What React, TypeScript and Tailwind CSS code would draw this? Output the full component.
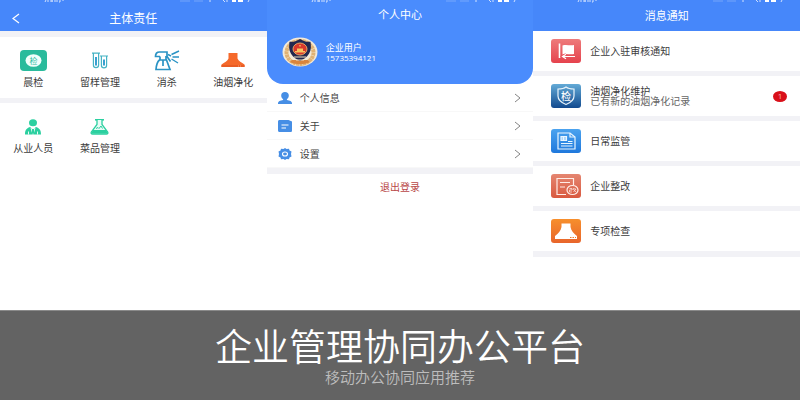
import React from 'react';

const StatusBar = () => (
  <div className="flex h-[3px] justify-between overflow-hidden pl-11 pr-4 text-white" aria-hidden="true">
    <svg width="20" height="3" viewBox="0 0 20 3" stroke="currentColor" fill="none" opacity=".75">
      <path d="M1 2l1-2M4 0v2M6 1h3M8 0v2M11 2V0M12 1h2M16 0v2h-1M19 0v1" />
    </svg>
    <svg width="72" height="3" viewBox="0 0 72 3" stroke="currentColor" fill="none">
      <path d="M1 1h10M15 1h9" opacity=".25" />
      <path d="M31 0v2M44 0l2 2M48 0v2M70 0l-1 2" opacity=".75" />
      <path d="M53 1h4M59 1h5" strokeWidth="2" />
    </svg>
  </div>
);

const Chevron = () => (
  <svg width="7" height="10" viewBox="0 0 7 10" fill="none" stroke="#858585" strokeWidth="1">
    <path d="M1 1l5 4-5 4" />
  </svg>
);

/* Duty icons */
const CheckIcon = () => (
  <svg width="27" height="21" viewBox="0 0 27 21">
    <rect width="27" height="21" rx="4" fill="#2abb9c" />
    <ellipse cx="13.5" cy="10.5" rx="8" ry="6.3" fill="#f2fffc" />
    <text x="13.5" y="13.5" fontSize="8" textAnchor="middle" fill="#2abb9c">检</text>
  </svg>
);

const TubesIcon = () => (
  <svg width="16" height="17" viewBox="0 0 16 17" fill="none" stroke="#45b3c4" strokeWidth="1.2">
    <path d="M0 1.200h8M1.400 1v12a2.600 2.600 0 0 0 5.200 0V1M8 4h8M9.400 4v9.200a2.600 2.600 0 0 0 5.200 0V4" />
    <path d="M3 5h2v8.500H3zM11 7.500h2v6h-2z" fill="#3a9fd0" stroke="none" />
  </svg>
);

const SprayIcon = () => (
  <svg width="26" height="21" viewBox="0 0 26 21" fill="none" stroke="#2a93c4" strokeWidth="1.7">
    <path d="M6 6.500H1.500c0-3 1.500-4.500 4-4.500H13v4.500l3.500 5M6 6.500v3.500M12 6v4" />
    <path d="M5.500 10h7L16 19.500H2C2.300 15.500 3 12 5.500 10z" />
    <path d="M9 10v6" />
    <path d="M14 4.500l3 1.500M17.500 4.500L25 1M18.500 7H25M17.500 9l6.500 4" strokeWidth="1.4" />
  </svg>
);

const HoodIcon = () => (
  <svg width="24" height="15" viewBox="0 0 24 15">
    <path d="M7.500 0h9v5.500c1 2.500 4 4 7 6V14H.500v-2.500c3-2 6-3.500 7-6z" fill="#f5692b" />
    <path d="M.500 12h23v2H.500z" fill="#e95c24" />
    <path d="M17 13h4" stroke="#ffb48d" strokeDasharray="1 1" strokeWidth=".8" />
  </svg>
);

const StaffIcon = () => (
  <svg width="18" height="16" viewBox="0 0 18 16">
    <ellipse cx="9" cy="3.800" rx="4" ry="3.500" fill="#2bd0a0" />
    <path d="M1 15.500c0-4 1-6 5-7.500l3 2.500L12 8c4 1.500 5 3.500 5 7.500z" fill="#2bd0a0" />
    <path d="M7 9l2 6.500L11 9M4.500 12.500v3M13.500 12.500v3" stroke="#fff" strokeWidth=".9" fill="none" />
    <path d="M8.300 10h1.400l.5 4L9 15.500 7.800 14z" fill="#2bd0a0" />
  </svg>
);

const FlaskIcon = () => (
  <svg width="19" height="16" viewBox="0 0 19 16">
    <path d="M5 .800h9" stroke="#2bd0a0" strokeWidth="1.600" />
    <path d="M7 1v4.500L1.300 13c-.6 1.200 0 2 1.200 2h14c1.200 0 1.800-.8 1.200-2L12 5.500V1" fill="#e9fbf6" stroke="#2bd0a0" strokeWidth="1.300" />
    <path d="M3 11h13l2 3.500H1z" fill="#2bd0a0" />
    <path d="M6 9.500l2-1 1 1 2-2.500 1.500 2.500" fill="none" stroke="#2bd0a0" />
  </svg>
);

/* Profile menu icons */
const UserIcon = () => (
  <svg width="14" height="12" viewBox="0 0 14 12" fill="#468ee5">
    <path d="M7 0c2.400 0 3.800 1.400 3.800 3.500 0 1.700-.8 2.900-1.900 3.700v.8c3 .6 5.100 1.300 5.100 3V12H0v-1c0-1.700 2.100-2.400 5.100-3v-.8C4 6.400 3.200 5.200 3.200 3.500 3.200 1.400 4.600 0 7 0z" />
  </svg>
);

const AboutIcon = () => (
  <svg width="14" height="12" viewBox="0 0 14 12">
    <path d="M1.500 0h9L14 1.500v9c0 1-.6 1.500-1.500 1.500h-11C.6 12 0 11.400 0 10.500v-9C0 .6.600 0 1.500 0z" fill="#468ee5" />
    <path d="M3.500 5h7M3.500 8h4.500" stroke="#fff" strokeWidth="1.200" />
  </svg>
);

const GearIcon = () => (
  <svg width="14" height="12" viewBox="0 0 14 12">
    <path d="M5.500 1L7 0l1.500 1 2.500-.2.500 1.600 2 1-.5 2.600.5 2.600-2 1-.5 1.600-2.500-.2L7 12l-1.500-1-2.500.2-.5-1.600-2-1L1 6 .500 3.400l2-1L3 .800z" fill="#468ee5" />
    <ellipse cx="7" cy="6" rx="2.500" ry="2" fill="#468ee5" stroke="#fff" strokeWidth="1.100" />
  </svg>
);

const Avatar = () => (
  <svg width="36" height="30" viewBox="0 0 36 30" className="shrink-0">
    <ellipse cx="18" cy="15" rx="17.500" ry="14.500" fill="#f4ead8" />
    <ellipse cx="18" cy="15.500" rx="13.500" ry="11.500" fill="none" stroke="#e0b274" strokeWidth="4" strokeDasharray="3 .4" />
    <path d="M8 25c6 3 14 3 20 0l-2-2H10z" fill="#d9853d" />
    <path d="M18 2l4 2c2 .8 4 1 6.500.8.5 4 1 8-1.500 12-2 3.500-5 5.500-9 7.200-4-1.700-7-3.700-9-7.200-2.500-4-2-8-1.500-12C10 5 12 4.800 14 4z" fill="#23284f" />
    <ellipse cx="18" cy="12" rx="7" ry="6" fill="#d9382c" stroke="#efb064" strokeWidth=".9" />
    <path d="M13 14h10v1.500H13zM15 11.500h6V14h-6zM17.300 8h1.400v1.500h-1.400z" fill="#f6c45f" />
    <path d="M12 20h12M14 23h8" stroke="#efe0c0" strokeWidth="1" />
  </svg>
);

/* Message tiles */
const FlagArt = () => (
  <g fill="none" stroke="#fff">
    <path d="M8.500 4.500v14.500" strokeWidth="1.600" />
    <path d="M11.500 6.500c4-1.500 7 .5 11.500-.500v9c-4.500 1-7.500-1-11.500.500z" fill="#fff" stroke="none" />
    <path d="M12 17.500h12M15 15.300l-3.500 2.200 3.500 2.200" stroke="#e6505a" strokeWidth="2.600" />
    <path d="M12 17.500h12M15 15.300l-3.500 2.200 3.500 2.200" strokeWidth="1.200" />
  </g>
);

const ShieldArt = () => (
  <g>
    <path d="M15 3c2 1.600 5 2 8 2v7c0 4-3 6.500-8 8.500-5-2-8-4.500-8-8.500V5c3 0 6-.4 8-2z" fill="none" stroke="#e8f4fc" strokeWidth="1.200" />
    <text x="15" y="15.500" fontSize="10" fontWeight="500" textAnchor="middle" fill="#fff">检</text>
  </g>
);

const DocArt = () => (
  <g fill="none" stroke="#eaf6ff" strokeWidth="1.200">
    <path d="M7 4h12l5 4v12H7z" />
    <path d="M19 4v4h5" />
    <path d="M10 7.500h5.500v4H10zM12.500 8v3" fill="#a9d5fb" />
    <path d="M17 12.500h4.500M10 14.500h11.500M10 17h11.500" strokeWidth="1" />
  </g>
);

const ReviseArt = () => (
  <g fill="none" stroke="#ffece6" strokeWidth="1.200">
    <path d="M15 20.500H6V4.500h16.500V11" />
    <path d="M9 8.500h10M9 13h5" />
    <ellipse cx="21.500" cy="16" rx="5.500" ry="4.500" />
    <path d="M18.500 14.500h2.500v1.500h-2.500v2h2.500M23 14l-1 2M22.500 15h2.500l-2.500 3M23 16l2 2" strokeWidth=".7" />
  </g>
);

const RangeHoodArt = () => (
  <g>
    <path d="M10.500 4.500h9V8c.8 4 3 6.500 6.500 9v3H4v-3c3.500-2.500 5.700-5 6.500-9z" fill="#fff" />
    <path d="M19 18.500h6" stroke="#f27b2c" strokeDasharray="1.500 1" />
  </g>
);

const Tile = ({ id, from, to, children }: { id: string; from: string; to: string; children: React.ReactNode }) => (
  <svg width="30" height="24" viewBox="0 0 30 24" className="shrink-0">
    <defs>
      <linearGradient id={id} x1="0" y1="0" x2="0" y2="1">
        <stop offset="0" stopColor={from} />
        <stop offset="1" stopColor={to} />
      </linearGradient>
    </defs>
    <rect width="30" height="24" rx="3" fill={`url(#${id})`} />
    {children}
  </svg>
);

const dailyDuties = [
  { label: '晨检', icon: <CheckIcon /> },
  { label: '留样管理', icon: <TubesIcon /> },
  { label: '消杀', icon: <SprayIcon /> },
  { label: '油烟净化', icon: <HoodIcon /> },
];

const manageDuties = [
  { label: '从业人员', icon: <StaffIcon /> },
  { label: '菜品管理', icon: <FlaskIcon /> },
];

const menuItems = [
  { label: '个人信息', icon: <UserIcon /> },
  { label: '关于', icon: <AboutIcon /> },
  { label: '设置', icon: <GearIcon /> },
];

const messages = [
  { title: '企业入驻审核通知', from: '#ee7b7b', to: '#e5424d', art: <FlagArt /> },
  { title: '油烟净化维护', detail: '已有新的油烟净化记录', count: 1, from: '#63aad6', to: '#124a8f', art: <ShieldArt /> },
  { title: '日常监管', from: '#4ba3ef', to: '#1f78dc', art: <DocArt /> },
  { title: '企业整改', from: '#e58671', to: '#d9593f', art: <ReviseArt /> },
  { title: '专项检查', from: '#f78f2c', to: '#e8652b', art: <RangeHoodArt /> },
];

const DutyGrid = ({ items }: { items: { label: string; icon: React.ReactNode }[] }) => (
  <div className="grid grid-cols-4 bg-white pt-3 pb-[9px]">
    {items.map((item) => (
      <button key={item.label} type="button" className="flex flex-col items-center gap-[3px]">
        <span className="flex h-[23px] items-center">{item.icon}</span>
        <span className="text-[10px] leading-[14px] text-[#3c3c3c]">{item.label}</span>
      </button>
    ))}
  </div>
);

const DutyScreen = () => (
  <section>
    <header className="h-[31px] bg-[#4687fa] text-white">
      <StatusBar />
      <div className="grid grid-cols-[1fr_auto_1fr] items-center px-3 pt-1.5">
        <button type="button" aria-label="返回">
          <svg width="8" height="11" viewBox="0 0 8 11" fill="none" stroke="currentColor" strokeWidth="1.2">
            <path d="M7 1L1 5.500 7 10" />
          </svg>
        </button>
        <h2 className="text-[12px] leading-[18px]">主体责任</h2>
      </div>
    </header>
    <div className="flex flex-col gap-[5px] bg-[#f2f2f6] pt-1.5">
      <DutyGrid items={dailyDuties} />
      <DutyGrid items={manageDuties} />
    </div>
  </section>
);

const ProfileScreen = () => (
  <section>
    <header className="rounded-b-2xl bg-[#4a8cfd] pb-[17px] text-white">
      <StatusBar />
      <h2 className="pt-0.5 text-center text-[11px] leading-[18px]">个人中心</h2>
      <div className="flex items-center gap-2 pl-[15px] pt-[14px]">
        <Avatar />
        <div>
          <p className="text-[9px] leading-[11px]">企业用户</p>
          <p className="font-['Open_Sans',sans-serif] text-[8px] leading-[9px]">15735394121</p>
        </div>
      </div>
    </header>
    <ul>
      {menuItems.map((item) => (
        <li key={item.label}>
          <button type="button" className="flex h-7 w-full items-center gap-2 border-b border-[#f8f8f8] pl-[11px] pr-3 text-[10px] text-[#444]">
            {item.icon}
            <span className="flex-1 text-left">{item.label}</span>
            <Chevron />
          </button>
        </li>
      ))}
    </ul>
    <div className="h-1.5 bg-[#f2f2f6]" />
    <button type="button" className="block w-full py-[5px] text-center text-[10px] leading-4 text-[#b84646]">
      退出登录
    </button>
  </section>
);

const MessageScreen = () => (
  <section>
    <header className="h-[31px] bg-[#4687fa] text-white">
      <StatusBar />
      <h2 className="pt-[3px] text-center text-[11px] leading-[18px]">消息通知</h2>
    </header>
    <ul className="flex flex-col gap-[5px] bg-[#f2f2f6] pb-1.5">
      {messages.map((msg, index) => (
        <li key={msg.title} className="bg-white">
          <button type="button" className="flex h-10 w-full items-center gap-[9px] pl-[18px] pr-[13px] text-left text-[10px] leading-[10px]">
            <Tile id={`tile-${index}`} from={msg.from} to={msg.to}>
              {msg.art}
            </Tile>
            <span className="flex flex-1 flex-col text-[#3c3c3c]">
              {msg.title}
              {msg.detail && <span className="text-[#666]">{msg.detail}</span>}
            </span>
            {msg.count && (
              <span className="flex h-[11px] w-[14px] items-center justify-center rounded-[50%] bg-[#d9101a] font-['Open_Sans',sans-serif] text-[8px] text-[#ffb0b0]">
                {msg.count}
              </span>
            )}
          </button>
        </li>
      ))}
    </ul>
  </section>
);

const App = () => {
  return (
    <main className="flex min-h-screen flex-col bg-white font-['Noto_Sans_CJK_SC',sans-serif]">
      <div className="grid flex-1 grid-cols-3">
        <DutyScreen />
        <ProfileScreen />
        <MessageScreen />
      </div>
      <footer className="border-t border-[#8a8a8a] bg-[#636363] pt-[13px] pb-[14px] text-center">
        <h1 className="text-[37px] font-[350] leading-[43px] text-white">企业管理协同办公平台</h1>
        <p className="text-[15px] font-[350] leading-[19px] text-[#bdbdbd]">移动办公协同应用推荐</p>
      </footer>
    </main>
  );
};

export default App;
